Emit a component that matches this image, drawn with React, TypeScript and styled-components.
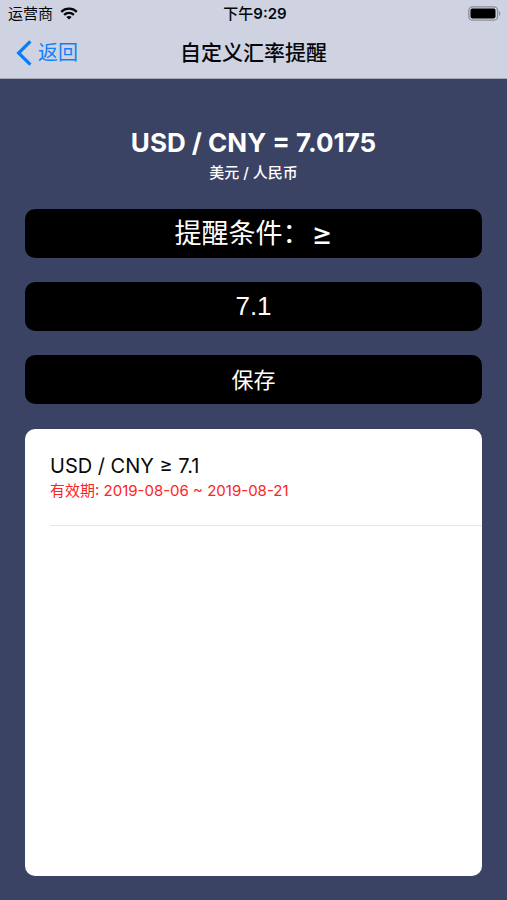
import React, { useState } from "react";
import styled, { createGlobalStyle } from "styled-components";

const GlobalStyle = createGlobalStyle`
  *, *::before, *::after { box-sizing: border-box; }
  body {
    margin: 0;
    background: #3b4365;
    font-family: Inter, "Noto Sans CJK SC", sans-serif;
  }
`;

const Screen = styled.div`
  display: flex;
  flex-direction: column;
  min-height: 100vh;
`;

const TopBar = styled.header`
  background: #cfd3e1;
  color: #05060a;
  border-bottom: 1px solid #a3a7b5;
`;

const StatusBar = styled.div`
  display: grid;
  grid-template-columns: 1fr auto 1fr;
  align-items: center;
  height: 27px;
  padding: 0 5px 0 8px;
  font-size: 15px;
  line-height: 27px;
`;

const Carrier = styled.div`
  display: flex;
  align-items: center;
  gap: 7px;
`;

const Clock = styled.time`
  font-size: 15px;
  font-weight: 600;
`;

const ClockPeriod = styled.span`
  font-weight: 500;
`;

const BatterySlot = styled.div`
  display: flex;
  justify-content: flex-end;
`;

const NavBar = styled.nav`
  display: grid;
  grid-template-columns: 1fr auto 1fr;
  align-items: center;
  height: 51px;
  padding: 0 16px;
`;

const BackLink = styled.a`
  display: flex;
  align-items: center;
  gap: 6px;
  color: #1480f8;
  font-size: 20px;
  line-height: 28px;
  text-decoration: none;
`;

const Title = styled.h1`
  margin: 0;
  font-size: 21px;
  font-weight: 500;
  line-height: 28px;
`;

const Main = styled.main`
  flex: 1;
  display: flex;
  flex-direction: column;
  padding: 46px 25px 24px;
`;

const Rate = styled.h2`
  margin: 0;
  color: #fff;
  font-size: 26px;
  font-weight: 700;
  line-height: 36px;
  text-align: center;
`;

const RateNames = styled.p`
  margin: 0 0 24px;
  color: #fff;
  font-size: 15px;
  font-weight: 500;
  line-height: 24px;
  text-align: center;
`;

const Form = styled.form`
  display: flex;
  flex-direction: column;
  gap: 24px;
  margin-bottom: 25px;
`;

const FormButton = styled.button<{ $size: number }>`
  display: flex;
  align-items: center;
  justify-content: center;
  gap: 2px;
  height: 49px;
  padding: 0;
  border: 0;
  border-radius: 10px;
  background: #000;
  color: #fff;
  font-family: inherit;
  font-size: ${(p) => p.$size}px;
  font-weight: 400;
  line-height: 48px;
  cursor: pointer;
`;

const Comparison = styled.span`
  font-size: 32px;
`;

const RateInput = styled.input`
  width: 100%;
  height: 49px;
  padding: 0;
  border: 0;
  border-radius: 10px;
  background: #000;
  color: #fff;
  font-family: "Liberation Sans", sans-serif;
  font-size: 26px;
  text-align: center;
`;

const AlertList = styled.ul`
  flex: 1;
  margin: 0;
  padding: 0 0 0 25px;
  border-radius: 10px;
  background: #fff;
  list-style: none;
`;

const AlertItem = styled.li`
  padding: 24px 0 22px;
  border-bottom: 1px solid #e6e6e8;
`;

const AlertRule = styled.div`
  color: #0a0a0a;
  font-size: 20px;
  line-height: 26px;
`;

const AlertPeriod = styled.div`
  color: #fb2424;
  font-size: 15px;
  line-height: 24px;
`;

const WifiIcon = () => (
  <svg width="18" height="13" viewBox="0 0 18 13" fill="none" stroke="#05060a" strokeWidth="2.3" aria-hidden="true">
    <path d="M1.2 4.8C5.6 0.6 12.4 0.6 16.8 4.8" />
    <path d="M4.1 7.8C6.9 5.2 11.1 5.2 13.9 7.8" />
    <path d="M9 12.6L6.3 9.9C7.8 8.6 10.2 8.6 11.7 9.9Z" fill="#05060a" stroke="none" />
  </svg>
);

const BatteryIcon = () => (
  <svg width="34" height="15" viewBox="0 0 34 15" aria-hidden="true">
    <rect x="0.8" y="0.8" width="28.8" height="13.4" rx="3.8" fill="none" stroke="#8b8e99" strokeWidth="1.3" />
    <rect x="2.5" y="2.6" width="25" height="9.8" rx="1.8" fill="#000" />
    <path d="M31 5.2C32.8 5.8 32.8 9.2 31 9.8Z" fill="#8b8e99" />
  </svg>
);

const BackIcon = () => (
  <svg width="16" height="26" viewBox="0 0 16 26" fill="none" stroke="#087cfb" strokeWidth="3.2" aria-hidden="true">
    <path d="M14.4 1.3L2.6 13L14.4 24.7" />
  </svg>
);

const alerts = [{ rule: "USD / CNY ≥ 7.1", period: "有效期: 2019-08-06 ~ 2019-08-21" }];

export default function App() {
  const [rate, setRate] = useState("7.1");
  const [atLeast, setAtLeast] = useState(true);

  return (
    <Screen lang="zh-CN">
      <GlobalStyle />
      <TopBar>
        <StatusBar>
          <Carrier>
            运营商
            <WifiIcon />
          </Carrier>
          <Clock dateTime="21:29">
            <ClockPeriod>下午</ClockPeriod>9:29
          </Clock>
          <BatterySlot>
            <BatteryIcon />
          </BatterySlot>
        </StatusBar>
        <NavBar>
          <BackLink href="#">
            <BackIcon />
            返回
          </BackLink>
          <Title>自定义汇率提醒</Title>
        </NavBar>
      </TopBar>
      <Main>
        <Rate>USD / CNY = 7.0175</Rate>
        <RateNames>美元 / 人民币</RateNames>
        <Form onSubmit={(e) => e.preventDefault()}>
          <FormButton type="button" $size={27} onClick={() => setAtLeast(!atLeast)}>
            提醒条件：
            <Comparison>{atLeast ? "≥" : "≤"}</Comparison>
          </FormButton>
          <RateInput
            aria-label="提醒汇率"
            inputMode="decimal"
            value={rate}
            onChange={(e) => setRate(e.target.value)}
          />
          <FormButton type="submit" $size={22}>
            保存
          </FormButton>
        </Form>
        <AlertList>
          {alerts.map((a) => (
            <AlertItem key={a.rule}>
              <AlertRule>{a.rule}</AlertRule>
              <AlertPeriod>{a.period}</AlertPeriod>
            </AlertItem>
          ))}
        </AlertList>
      </Main>
    </Screen>
  );
}
